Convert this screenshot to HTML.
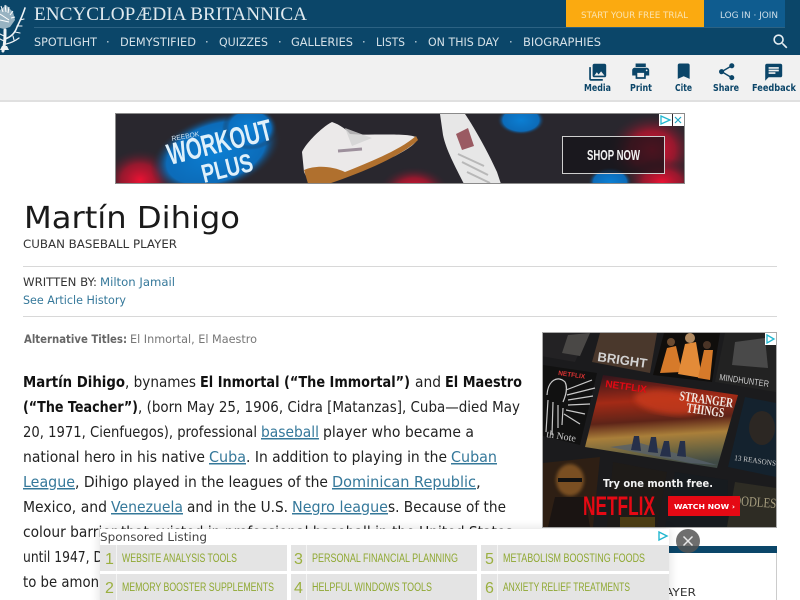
<!DOCTYPE html>
<html lang="en"><head><meta charset="utf-8"><title>Martín Dihigo</title>
<style>
html,body{margin:0;padding:0;background:#fff;width:800px;height:600px;overflow:hidden}
svg{display:block;position:absolute;left:0;top:0}
.b{font-family:"DejaVu Sans",sans-serif;font-size:15px;fill:#222}
.bb{font-family:"DejaVu Sans",sans-serif;font-size:15px;font-weight:bold;fill:#111}
.l{font-family:"DejaVu Sans",sans-serif;font-size:15px;fill:#35789a}
.n{font-family:"DejaVu Sans",sans-serif;font-size:11.5px;fill:#d5e1e8}
.t{font-family:"DejaVu Sans",sans-serif;font-size:9.5px;font-weight:bold;fill:#0b4568}
.ad{font-family:"Liberation Sans",sans-serif;font-size:11.5px;fill:#8fa832}
.num{font-family:"Liberation Sans",sans-serif;font-size:16px;fill:#9bb040}
</style></head><body>
<svg width="800" height="600" viewBox="0 0 800 600" xmlns="http://www.w3.org/2000/svg">
<defs>
<radialGradient id="rd"><stop offset="0" stop-color="#ea1233"/><stop offset=".5" stop-color="#a8162e" stop-opacity=".85"/><stop offset="1" stop-color="#27252c" stop-opacity="0"/></radialGradient>
<radialGradient id="bl"><stop offset="0" stop-color="#0b7fd3"/><stop offset=".75" stop-color="#0b6fc0" stop-opacity=".95"/><stop offset="1" stop-color="#27252c" stop-opacity="0"/></radialGradient>
<linearGradient id="st" x1="0.1" y1="0" x2="0.2" y2="1"><stop offset="0" stop-color="#30141c"/><stop offset=".3" stop-color="#a32a16"/><stop offset=".52" stop-color="#5e2418"/><stop offset=".68" stop-color="#a97f3a"/><stop offset=".85" stop-color="#6d6540"/><stop offset="1" stop-color="#3f4a45"/></linearGradient>
<clipPath id="c1"><rect x="116" y="114" width="568" height="69"/></clipPath>
<clipPath id="c2"><rect x="543" y="333" width="233" height="194"/></clipPath>
<filter id="sh" x="-5%" y="-30%" width="110%" height="160%"><feGaussianBlur stdDeviation="5"/></filter>
<filter id="bl2"><feGaussianBlur stdDeviation="1.5"/></filter>
<filter id="bl4"><feGaussianBlur stdDeviation="3"/></filter>
</defs>

<!-- header -->
<rect x="0" y="0" width="800" height="55" fill="#0b4669"/>
<rect x="34" y="27" width="751" height="1" fill="#2c6283"/>
<rect x="566" y="0" width="138" height="27" fill="#fbaa10"/>
<rect x="704" y="0" width="81" height="27" fill="#0f5c8f"/>
<text x="581" y="18" font-family="DejaVu Sans" font-size="9" fill="#fbe3ae" textLength="107" lengthAdjust="spacingAndGlyphs">START YOUR FREE TRIAL</text>
<text x="720" y="18" font-family="DejaVu Sans" font-size="9" fill="#cfdfe9" textLength="58" lengthAdjust="spacingAndGlyphs">LOG IN · JOIN</text>
<text x="34" y="20" font-family="Liberation Serif" font-size="19" fill="#dfe9ee" textLength="273" lengthAdjust="spacingAndGlyphs">ENCYCLOPÆDIA BRITANNICA</text>

<!-- thistle -->
<g stroke="#eef3f6" fill="none" stroke-linecap="round">
<path d="M3 51 C5 44 5 38 5 30" stroke-width="3"/>
<path d="M5 39 C11 37 15 33 17 27 C20 21 23 14 25 8" stroke-width="1.6"/>
<path d="M6 44 C11 43 15 41 19 38" stroke-width="1.3"/>
<path d="M15 32l5 1M17 26l5 0M20 20l4-1M13 36l1 4M4 36l-4-2M4 41l-4-2" stroke-width="1.1"/>
</g>
<path d="M0 50 H9 L7 46 H2Z" fill="#eef3f6"/>
<path d="M0 10 L6 5 L13 12 L15 20 L10 27 L4 29 L0 28Z" fill="#c8d8e0" opacity=".75"/>
<path d="M1 6l2 6M5 5l1 7M9 7l-1 6M13 11l-3 4M15 17l-4 1M0 14l9 6M0 20l9 2" stroke="#fff" stroke-width="1" fill="none"/>

<text class="n" x="34" y="46" textLength="63" lengthAdjust="spacingAndGlyphs">SPOTLIGHT</text>
<text class="n" x="106" y="46">·</text>
<text class="n" x="120" y="46" textLength="76" lengthAdjust="spacingAndGlyphs">DEMYSTIFIED</text>
<text class="n" x="205" y="46">·</text>
<text class="n" x="219" y="46" textLength="49" lengthAdjust="spacingAndGlyphs">QUIZZES</text>
<text class="n" x="278" y="46">·</text>
<text class="n" x="291" y="46" textLength="62" lengthAdjust="spacingAndGlyphs">GALLERIES</text>
<text class="n" x="362" y="46">·</text>
<text class="n" x="376" y="46" textLength="29" lengthAdjust="spacingAndGlyphs">LISTS</text>
<text class="n" x="414" y="46">·</text>
<text class="n" x="428" y="46" textLength="71" lengthAdjust="spacingAndGlyphs">ON THIS DAY</text>
<text class="n" x="509" y="46">·</text>
<text class="n" x="523" y="46" textLength="78" lengthAdjust="spacingAndGlyphs">BIOGRAPHIES</text>
<g transform="translate(771,32) scale(.8)"><path fill="#e6eef2" d="M15.5 14h-.79l-.28-.27C15.41 12.59 16 11.11 16 9.5 16 5.91 13.09 3 9.5 3S3 5.91 3 9.5 5.91 16 9.5 16c1.61 0 3.09-.59 4.23-1.57l.27.28v.79l5 4.99L20.49 19l-4.99-5zm-6 0C7.01 14 5 11.99 5 9.5S7.01 5 9.5 5 14 7.01 14 9.5 11.99 14 9.5 14z"/></g>

<!-- toolbar -->
<rect x="0" y="55" width="800" height="45" fill="#f1f1f1"/>
<rect x="0" y="100" width="800" height="2" fill="#e0e0e0"/>
<g fill="#0b4568">
<g transform="translate(587.5,62) scale(.85)"><path d="M22 16V4c0-1.1-.9-2-2-2H8c-1.1 0-2 .9-2 2v12c0 1.1.9 2 2 2h12c1.1 0 2-.9 2-2zm-11-4l2.03 2.71L16 11l4 5H8l3-4zM2 6v14c0 1.1.9 2 2 2h14v-2H4V6H2z"/></g>
<g transform="translate(630.5,61) scale(.85)"><path d="M19 8H5c-1.66 0-3 1.34-3 3v6h4v4h12v-4h4v-6c0-1.66-1.34-3-3-3zm-3 11H8v-5h8v5zm3-7c-.55 0-1-.45-1-1s.45-1 1-1 1 .45 1 1-.45 1-1 1zm-1-9H6v4h12V3z"/></g>
<g transform="translate(673.5,61) scale(.85)"><path d="M17 3H7c-1.1 0-1.99.9-1.99 2L5 21l7-3 7 3V5c0-1.1-.9-2-2-2z"/></g>
<g transform="translate(716.5,61.5) scale(.85)"><path d="M18 16.08c-.76 0-1.44.3-1.96.77L8.91 12.7c.05-.23.09-.46.09-.7s-.04-.47-.09-.7l7.05-4.11c.54.5 1.25.81 2.04.81 1.66 0 3-1.34 3-3s-1.34-3-3-3-3 1.34-3 3c0 .24.04.47.09.7L8.04 9.81C7.5 9.31 6.79 9 6 9c-1.66 0-3 1.34-3 3s1.34 3 3 3c.79 0 1.5-.31 2.04-.81l7.12 4.16c-.05.21-.08.43-.08.65 0 1.61 1.31 2.92 2.92 2.92 1.61 0 2.92-1.31 2.92-2.92s-1.31-2.92-2.92-2.92z"/></g>
<g transform="translate(763.5,62) scale(.85)"><path d="M20 2H4c-1.1 0-1.99.9-1.99 2L2 22l4-4h14c1.1 0 2-.9 2-2V4c0-1.1-.9-2-2-2zM6 9h12v2H6V9zm8 5H6v-2h8v2zm4-6H6V6h12v2z"/></g>
</g>
<text class="t" x="584" y="91" textLength="27" lengthAdjust="spacingAndGlyphs">Media</text>
<text class="t" x="630" y="91" textLength="22" lengthAdjust="spacingAndGlyphs">Print</text>
<text class="t" x="675" y="91" textLength="17" lengthAdjust="spacingAndGlyphs">Cite</text>
<text class="t" x="713" y="91" textLength="26" lengthAdjust="spacingAndGlyphs">Share</text>
<text class="t" x="752" y="91" textLength="44" lengthAdjust="spacingAndGlyphs">Feedback</text>

<!-- leaderboard ad -->
<rect x="115.5" y="113.5" width="569" height="70" fill="#29272e" stroke="#8b8b8b"/>
<g clip-path="url(#c1)">
<ellipse cx="140" cy="180" rx="38" ry="32" fill="url(#rd)"/>
<ellipse cx="414" cy="190" rx="36" ry="24" fill="url(#rd)"/>
<ellipse cx="652" cy="150" rx="46" ry="38" fill="url(#rd)"/>
<ellipse cx="662" cy="182" rx="38" ry="24" fill="url(#rd)"/>
<ellipse cx="521" cy="120" rx="24" ry="15" fill="url(#bl)"/>
<ellipse cx="610" cy="182" rx="22" ry="15" fill="url(#bl)"/>
<ellipse cx="216" cy="153" rx="68" ry="38" fill="url(#bl)" transform="rotate(-18 216 153)"/>
<ellipse cx="250" cy="128" rx="28" ry="22" fill="url(#bl)"/>
<text x="172" y="141" font-family="Liberation Sans" font-size="7" fill="#d6e6f2" textLength="28" lengthAdjust="spacingAndGlyphs" transform="rotate(-10 172 141)">REEBOK</text>
<text x="170" y="165" font-family="Liberation Sans" font-weight="bold" font-size="30" fill="#dff0fa" textLength="107" lengthAdjust="spacingAndGlyphs" transform="rotate(-14 170 165)">WORKOUT</text>
<text x="204" y="183" font-family="Liberation Sans" font-weight="bold" font-size="26" fill="#dff0fa" textLength="52" lengthAdjust="spacingAndGlyphs" transform="rotate(-14 204 183)">PLUS</text>
<!-- shoe 1 -->
<path d="M302 152 C306 143 322 127 332 122 C338 124 345 128 350 134 C370 136 412 132 417 138 C418 142 410 148 395 156 L345 176 L310 184 L304 172Z" fill="#ebe9e9"/>
<path d="M304 170 L309 187 L325 185 C350 177 400 158 418 140 L416 136 C400 150 370 162 345 172 C332 166 316 165 304 170Z" fill="#b0702e"/>
<path d="M338 151 L362 149" stroke="#8a7a8a" stroke-width="3" opacity=".8"/>
<path d="M345 128 L372 138 L352 146Z" fill="#d2d2d2" opacity=".8"/>
<!-- shoe 2 -->
<path d="M440 114 H465 C472 124 486 148 497 172 L501 184 H464 C456 168 446 150 443 135Z" fill="#e7e7e7"/>
<path d="M456 134 L468 128 L474 146 L462 150Z" fill="#9a5a62"/>
<path d="M458 154 L484 166 M462 162 L488 175 M467 172 L490 183" stroke="#b8b8b8" stroke-width="2"/>
<rect x="562.5" y="136.5" width="102" height="37" fill="#15141a" fill-opacity=".75" stroke="#cfcfcf" stroke-width="1"/>
<text x="587" y="160" font-family="Liberation Sans" font-weight="bold" font-size="15" fill="#f2f2f2" textLength="53" lengthAdjust="spacingAndGlyphs">SHOP NOW</text>
</g>
<rect x="659" y="114" width="13" height="12" fill="#fff"/>
<rect x="673" y="114" width="11" height="12" fill="#fff"/>
<path d="M661 116 L670 120 L661 124Z" fill="none" stroke="#22b7d0" stroke-width="1.3"/>
<path d="M675 117 L681 123 M681 117 L675 123" stroke="#22a7c5" stroke-width="1.2"/>

<!-- title -->
<text x="24" y="228" font-family="DejaVu Sans" font-size="30" fill="#1a1a1a" textLength="216" lengthAdjust="spacingAndGlyphs">Martín Dihigo</text>
<text x="23" y="248" font-family="DejaVu Sans" font-size="11.5" fill="#333" textLength="154" lengthAdjust="spacingAndGlyphs">CUBAN BASEBALL PLAYER</text>
<rect x="23" y="266" width="754" height="1" fill="#d8d8d8"/>
<text x="23" y="286" font-family="DejaVu Sans" font-size="11.5" fill="#333" textLength="74" lengthAdjust="spacingAndGlyphs">WRITTEN BY:</text>
<text x="100" y="286" font-family="DejaVu Sans" font-size="11.5" fill="#35789a" textLength="75" lengthAdjust="spacingAndGlyphs">Milton Jamail</text>
<text x="23" y="304" font-family="DejaVu Sans" font-size="11.5" fill="#35789a" textLength="103" lengthAdjust="spacingAndGlyphs">See Article History</text>
<rect x="23" y="316" width="754" height="1" fill="#d8d8d8"/>
<text x="24" y="343" font-family="DejaVu Sans" font-size="11.5" font-weight="bold" fill="#666" textLength="103" lengthAdjust="spacingAndGlyphs">Alternative Titles:</text>
<text x="130" y="343" font-family="DejaVu Sans" font-size="11.5" fill="#777" textLength="127" lengthAdjust="spacingAndGlyphs">El Inmortal, El Maestro</text>

<!-- article -->
<text class="bb" x="23" y="387" textLength="102" lengthAdjust="spacingAndGlyphs">Martín Dihigo</text>
<text class="b" x="125" y="387" textLength="71" lengthAdjust="spacingAndGlyphs">, bynames</text>
<text class="bb" x="200" y="387" textLength="210" lengthAdjust="spacingAndGlyphs">El Inmortal (“The Immortal”)</text>
<text class="b" x="415" y="387" textLength="26" lengthAdjust="spacingAndGlyphs">and</text>
<text class="bb" x="445" y="387" textLength="77" lengthAdjust="spacingAndGlyphs">El Maestro</text>
<text class="bb" x="23" y="412" textLength="115" lengthAdjust="spacingAndGlyphs">(“The Teacher”)</text>
<text class="b" x="138" y="412" textLength="382" lengthAdjust="spacingAndGlyphs">, (born May 25, 1906, Cidra [Matanzas], Cuba—died May</text>
<text class="b" x="23" y="437" textLength="234" lengthAdjust="spacingAndGlyphs">20, 1971, Cienfuegos), professional</text>
<text class="l" x="261" y="437" textLength="58" lengthAdjust="spacingAndGlyphs" text-decoration="underline">baseball</text>
<text class="b" x="323" y="437" textLength="151" lengthAdjust="spacingAndGlyphs">player who became a</text>
<text class="b" x="23" y="462" textLength="182" lengthAdjust="spacingAndGlyphs">national hero in his native</text>
<text class="l" x="209" y="462" textLength="37" lengthAdjust="spacingAndGlyphs" text-decoration="underline">Cuba</text>
<text class="b" x="246" y="462" textLength="201" lengthAdjust="spacingAndGlyphs">. In addition to playing in the</text>
<text class="l" x="451" y="462" textLength="46" lengthAdjust="spacingAndGlyphs" text-decoration="underline">Cuban</text>
<text class="l" x="23" y="487" textLength="52" lengthAdjust="spacingAndGlyphs" text-decoration="underline">League</text>
<text class="b" x="75" y="487" textLength="253" lengthAdjust="spacingAndGlyphs">, Dihigo played in the leagues of the</text>
<text class="l" x="332" y="487" textLength="144" lengthAdjust="spacingAndGlyphs" text-decoration="underline">Dominican Republic</text>
<text class="b" x="476" y="487">,</text>
<text class="b" x="23" y="512" textLength="84" lengthAdjust="spacingAndGlyphs">Mexico, and</text>
<text class="l" x="111" y="512" textLength="72" lengthAdjust="spacingAndGlyphs" text-decoration="underline">Venezuela</text>
<text class="b" x="187" y="512" textLength="101" lengthAdjust="spacingAndGlyphs">and in the U.S.</text>
<text class="l" x="292" y="512" textLength="96" lengthAdjust="spacingAndGlyphs" text-decoration="underline">Negro league</text>
<text class="b" x="388" y="512" textLength="118" lengthAdjust="spacingAndGlyphs">s. Because of the</text>
<text class="b" x="23" y="537" textLength="494" lengthAdjust="spacingAndGlyphs">colour barrier that existed in professional baseball in the United States,</text>
<text class="b" x="23" y="562" textLength="80" lengthAdjust="spacingAndGlyphs">until 1947, D</text>
<text class="b" x="23" y="587" textLength="76" lengthAdjust="spacingAndGlyphs">to be amon</text>

<!-- netflix ad -->
<rect x="542.5" y="332.5" width="234" height="195" fill="#1b1b1d" stroke="#aaa"/>
<g clip-path="url(#c2)">
<!-- top row -->
<polygon points="535,333 588,333 575,362 535,355" fill="#232224"/>
<path d="M568 335 L590 333 L580 356 L562 353Z" fill="#4a4846"/>
<polygon points="600,333 657,333 650,373 592,362" fill="#4a382c"/>
<text x="597" y="361" font-family="Liberation Sans" font-size="13" font-weight="bold" fill="#d2d2d2" textLength="50" lengthAdjust="spacingAndGlyphs" transform="rotate(8 597 361)">BRIGHT</text>
<polygon points="664,333 720,333 712,382 653,375" fill="#100e0c"/>
<path d="M660 373 L667 348 L676 346 L682 372Z" fill="#d67a2a"/>
<path d="M678 374 L685 344 L696 342 L702 378Z" fill="#e38b38"/>
<path d="M698 378 L704 350 L713 350 L710 380Z" fill="#d67a2a"/>
<circle cx="671" cy="342" r="4" fill="#6a4a30"/><circle cx="690" cy="338" r="5" fill="#b08a62"/><circle cx="707" cy="345" r="4" fill="#4a3426"/>
<polygon points="725,333 776,333 776,392 715,382" fill="#222"/>
<path d="M735 342 L765 338 L768 368 L732 365Z" fill="#5a5a5a" opacity=".7"/>
<text x="719" y="380" font-family="Liberation Sans" font-size="9" fill="#ccc" textLength="50" lengthAdjust="spacingAndGlyphs" transform="rotate(8 719 380)">MINDHUNTER</text>
<!-- middle row -->
<polygon points="543,365 597,373 580,445 543,436" fill="#111"/>
<g stroke="#c8c8c8" fill="none" stroke-width="1.2">
<path d="M547 395 C548 380 558 375 565 382 C568 388 566 395 563 402"/>
<path d="M566 390 L592 380 M567 395 L595 388 M568 400 L593 396 M568 405 L590 404 M566 410 L585 414 M564 414 L580 424"/>
<path d="M548 400 L546 432 M553 402 L552 435 M558 405 L558 428 M563 408 L562 425"/>
</g>
<text x="546" y="437" font-family="Liberation Serif" font-size="10" fill="#ccc" transform="rotate(9 546 437)">th Note</text>
<text x="558" y="375" font-family="Liberation Sans" font-size="6.5" font-weight="bold" fill="#d33" transform="rotate(8 558 375)">NETFLIX</text>
<polygon points="603,375 738,395 717,468 585,447" fill="url(#st)"/>
<ellipse cx="668" cy="402" rx="34" ry="12" fill="#c93a1a" opacity=".8" filter="url(#bl4)" transform="rotate(8 668 402)"/>
<polygon points="610,447 640,443 717,465 690,463" fill="#56606a" opacity=".8"/>
<text x="605" y="387" font-family="Liberation Sans" font-size="10" font-weight="bold" fill="#e50914" transform="rotate(8 605 387)">NETFLIX</text>
<text x="679" y="400" font-family="Liberation Serif" font-size="13.5" font-weight="bold" fill="#f0e8e2" textLength="54" lengthAdjust="spacingAndGlyphs" transform="rotate(8 679 400)">STRANGER</text>
<text x="686" y="412" font-family="Liberation Serif" font-size="13.5" font-weight="bold" fill="#f0e8e2" textLength="38" lengthAdjust="spacingAndGlyphs" transform="rotate(8 686 412)">THINGS</text>
<path d="M631 450l3-14h5l2 15zM648 452l3-15h5l2 16zM660 456l4-15h5l2 16zM677 456l3-15h5l1 16z" fill="#26304a"/>
<polygon points="745,397 776,403 776,477 728,467" fill="#14222e"/>
<ellipse cx="762" cy="428" rx="13" ry="17" fill="#2c2723"/>
<text x="734" y="460" font-family="Liberation Serif" font-size="7.5" fill="#ccc" textLength="42" transform="rotate(8 734 460)" lengthAdjust="spacingAndGlyphs">13 REASONS</text>
<!-- bottom row -->
<polygon points="543,463 600,457 593,527 543,527" fill="#2e1f14"/>
<ellipse cx="570" cy="480" rx="14" ry="16" fill="#7a5020" filter="url(#bl2)"/>
<rect x="558" y="478" width="24" height="4" fill="#111"/>
<path d="M555 497 L585 497 L590 527 L548 527Z" fill="#1a1412"/>
<polygon points="613,462 667,472 657,527 607,527" fill="#1e1b18"/>
<rect x="620" y="517" width="35" height="10" fill="#4c3d14"/>
<polygon points="675,472 728,480 727,527 665,527" fill="#171b1f"/>
<polygon points="735,482 776,488 776,527 727,527" fill="#2e2c24"/>
<text x="733" y="505" font-family="Liberation Serif" font-size="14" fill="#a89f80" textLength="43" lengthAdjust="spacingAndGlyphs" transform="rotate(4 733 505)">OODLES</text>
<text x="603" y="487" font-family="DejaVu Sans" font-size="10.5" font-weight="bold" fill="#f3f3f3" textLength="110" lengthAdjust="spacingAndGlyphs">Try one month free.</text>
<text x="583" y="515" font-family="Liberation Sans" font-size="27" font-weight="bold" fill="#e50914" textLength="72" lengthAdjust="spacingAndGlyphs">NETFLIX</text>
<rect x="668" y="496" width="72" height="20" fill="#e50914"/>
<text x="674" y="509" font-family="DejaVu Sans" font-size="7" font-weight="bold" fill="#fff" textLength="61" lengthAdjust="spacingAndGlyphs">WATCH NOW ›</text>
</g>
<rect x="765" y="333" width="11" height="12" fill="#fff"/>
<path d="M767 335 L774 339 L767 343Z" fill="none" stroke="#22b7d0" stroke-width="1.3"/>

<!-- sidebar card -->
<rect x="542.5" y="546.5" width="234" height="60" fill="#fff" stroke="#ccc"/>
<rect x="542" y="546" width="235" height="7" fill="#0b4669"/>
<text x="640" y="596" font-family="DejaVu Sans" font-size="11" fill="#333" textLength="56" lengthAdjust="spacingAndGlyphs">L PLAYER</text>

<!-- sticky ad -->
<rect x="100" y="529" width="569" height="80" fill="#000" opacity=".14" filter="url(#sh)"/>
<rect x="100" y="529" width="569" height="71" fill="#fff"/>
<text x="100" y="541" font-family="DejaVu Sans" font-size="11.5" fill="#444" textLength="107" lengthAdjust="spacingAndGlyphs">Sponsored Listing</text>
<path d="M659 532 L667 536 L659 540Z" fill="none" stroke="#22b7d0" stroke-width="1.4"/>
<g fill="#e4e4e4">
<rect x="100" y="545" width="187" height="26"/><rect x="291" y="545" width="186" height="26"/><rect x="481" y="545" width="188" height="26"/>
<rect x="100" y="574" width="187" height="26"/><rect x="291" y="574" width="186" height="26"/><rect x="481" y="574" width="188" height="26"/>
</g>
<g fill="#f4f4f4">
<rect x="116" y="545" width="1" height="26"/><rect x="306" y="545" width="1" height="26"/><rect x="497" y="545" width="1" height="26"/>
<rect x="116" y="574" width="1" height="26"/><rect x="306" y="574" width="1" height="26"/><rect x="497" y="574" width="1" height="26"/>
</g>
<text class="num" x="105" y="564">1</text><text class="num" x="294" y="564">3</text><text class="num" x="485" y="564">5</text>
<text class="num" x="105" y="593">2</text><text class="num" x="294" y="593">4</text><text class="num" x="485" y="593">6</text>
<text class="ad" x="122" y="562" textLength="115" lengthAdjust="spacingAndGlyphs">WEBSITE ANALYSIS TOOLS</text>
<text class="ad" x="312" y="562" textLength="146" lengthAdjust="spacingAndGlyphs">PERSONAL FINANCIAL PLANNING</text>
<text class="ad" x="503" y="562" textLength="142" lengthAdjust="spacingAndGlyphs">METABOLISM BOOSTING FOODS</text>
<text class="ad" x="122" y="591" textLength="152" lengthAdjust="spacingAndGlyphs">MEMORY BOOSTER SUPPLEMENTS</text>
<text class="ad" x="312" y="591" textLength="120" lengthAdjust="spacingAndGlyphs">HELPFUL WINDOWS TOOLS</text>
<text class="ad" x="503" y="591" textLength="127" lengthAdjust="spacingAndGlyphs">ANXIETY RELIEF TREATMENTS</text>
<circle cx="688" cy="541" r="12" fill="#555" opacity=".85"/>
<path d="M683.5 536.5 L692.5 545.5 M692.5 536.5 L683.5 545.5" stroke="#e8e8e8" stroke-width="1.5"/>
</svg>
</body></html>
